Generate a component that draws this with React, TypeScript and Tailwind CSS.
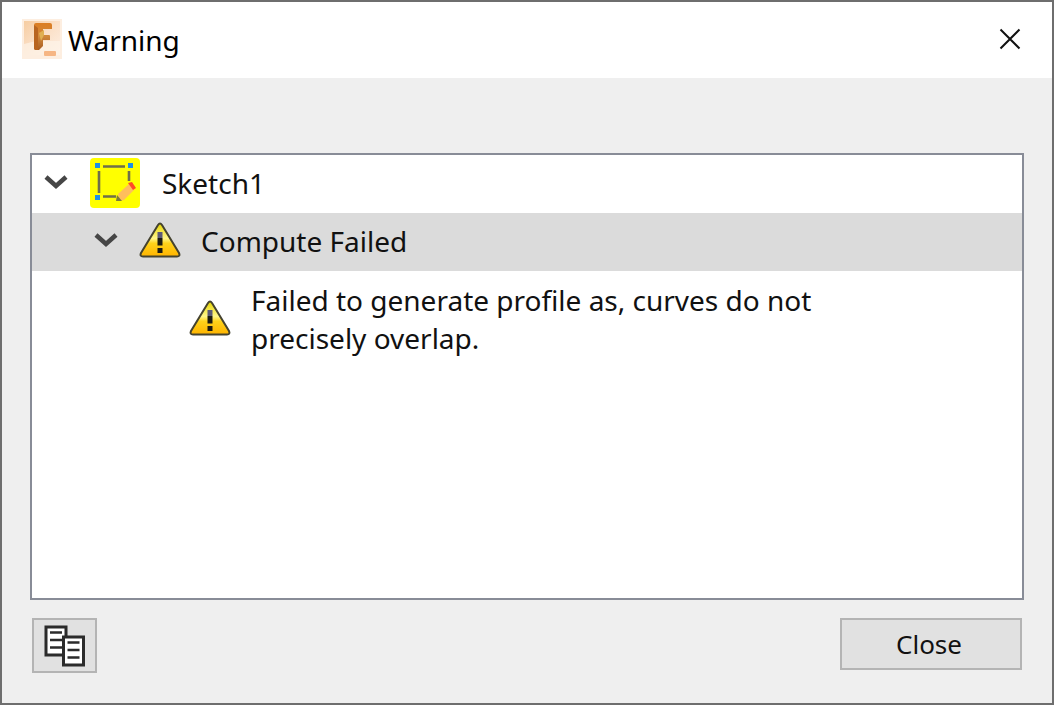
import { useState } from "react";

function FusionIcon() {
  return (
    <svg width="40" height="40" viewBox="0 0 40 40" className="shrink-0" aria-hidden="true">
      <defs>
        <linearGradient id="fusion-bg" x1="0" y1="0" x2="1" y2="1">
          <stop offset="0" stopColor="#f6cda2" />
          <stop offset="0.5" stopColor="#fbe0c8" />
          <stop offset="1" stopColor="#fdf0e4" />
        </linearGradient>
        <linearGradient id="fusion-f" x1="0" y1="0" x2="0" y2="1">
          <stop offset="0" stopColor="#dc7d22" />
          <stop offset="0.5" stopColor="#d0883c" />
          <stop offset="1" stopColor="#a85c20" />
        </linearGradient>
      </defs>
      <rect width="40" height="40" fill="#fdeee0" />
      <rect x="2" y="2" width="36" height="34" fill="url(#fusion-bg)" />
      <path d="M2 25l12-3h24v14H2z" fill="#fef3e8" opacity="0.7" />
      <path d="M14 4h14q2 0 2 2v4h-9v6h6q1 0 1 1v4h-7v6l-4 4h-3q-2 0-2-2V6q0-2 2-2z" fill="url(#fusion-f)" />
      <path d="M12 6l4 3v22h-2q-2 0-2-2z" fill="#b8641f" />
      <path d="M17 14l5-3v5l-3 6z" fill="#e0b052" />
      <rect x="22" y="32" width="12" height="5" rx="1" fill="#f6b684" />
    </svg>
  );
}

function SketchIcon() {
  return (
    <svg width="50" height="50" viewBox="0 0 50 50" className="shrink-0" aria-hidden="true">
      <rect width="50" height="50" rx="4" fill="#ffff00" />
      <path
        d="M13 8.500h22M9 13v22M39 13v10M13 38.500h13"
        stroke="#6f6f4a"
        strokeWidth="2.600"
        fill="none"
      />
      <path d="M5 5h5v5H5zM38 5h5v5h-5zM5 37h5v5H5z" fill="#1e90e6" />
      <path d="M28 36l11-10 5 6-10 10-4 1z" fill="#ffbe5c" />
      <path d="M38 25l4-1 4 6-3 2z" fill="#ff4a26" />
      <path d="M27 37l5 6h-6z" fill="#7b7b3a" />
    </svg>
  );
}

function WarningIcon() {
  return (
    <svg width="42" height="38" viewBox="0 0 42 38" className="shrink-0" aria-hidden="true">
      <defs>
        <linearGradient id="warning-fill" x1="0" y1="0" x2="0" y2="1">
          <stop offset="0" stopColor="#e6d400" />
          <stop offset="0.45" stopColor="#fff68a" />
          <stop offset="0.6" stopColor="#ffd21a" />
          <stop offset="1" stopColor="#ffb400" />
        </linearGradient>
      </defs>
      <path
        d="M19 3q2-3 4 0L40 31q1.500 3.500-2 3.500H4q-3.500 0-2-3.500z"
        fill="url(#warning-fill)"
        stroke="#45432f"
        strokeWidth="2"
      />
      <path d="M18.500 10h5v6h-5z" fill="#5c5a78" />
      <path d="M18.500 16h5v7.500h-5zM18.500 26h5v5h-5z" fill="#1c1a10" />
    </svg>
  );
}

function CopyIcon() {
  return (
    <svg width="42" height="42" viewBox="0 0 42 42" aria-hidden="true">
      <g stroke="#2b2b2b" fill="none">
        <path d="M2 2h20v28H2z" fill="#fff" strokeWidth="3" />
        <path d="M6 7.500h12M6 15h12M6 22.500h12" strokeWidth="2.500" />
        <path d="M19.500 12h20v28h-20z" fill="#fff" strokeWidth="3" />
        <path d="M23.500 17.500h12M23.500 25h12M23.500 32.500h12" strokeWidth="2.500" />
      </g>
    </svg>
  );
}

function Chevron({ open }: { open: boolean }) {
  return (
    <svg
      width="24"
      height="16"
      viewBox="0 0 24 16"
      className={open ? "" : "-rotate-90"}
      aria-hidden="true"
    >
      <path d="M2 2l10 9L22 2" fill="none" stroke="#464646" strokeWidth="4.500" />
    </svg>
  );
}

export default function App() {
  const [sketchOpen, setSketchOpen] = useState(true);
  const [failureOpen, setFailureOpen] = useState(true);

  return (
    <div
      role="dialog"
      aria-labelledby="dialog-title"
      className="flex min-h-screen flex-col border-2 border-[#6e6e6e] bg-[#efefef] font-['Noto_Sans','Open_Sans',sans-serif] text-[28px] text-[#111]"
    >
      <header className="flex h-[76px] items-center justify-between bg-white pb-0.5 pl-5 pr-[31px]">
        <div className="flex items-center gap-1.5">
          <FusionIcon />
          <h1 id="dialog-title" className="pt-0.5 leading-10 text-black">
            Warning
          </h1>
        </div>
        <button type="button" aria-label="Close window">
          <svg width="22" height="22" viewBox="0 0 22 22" aria-hidden="true">
            <path d="M1.500 1.500l19 19M20.500 1.500l-19 19" stroke="#111" strokeWidth="2" />
          </svg>
        </button>
      </header>

      <main className="flex flex-1 flex-col px-7 pt-[75px]">
        <div className="flex-1 border-2 border-[#888c97] bg-white">
          <div className="flex h-[58px] items-center pb-0.5 pl-3">
            <button
              type="button"
              aria-label="Toggle Sketch1"
              aria-expanded={sketchOpen}
              onClick={() => setSketchOpen(!sketchOpen)}
            >
              <Chevron open={sketchOpen} />
            </button>
            <div className="ml-[22px] flex items-center gap-[22px]">
              <SketchIcon />
              <span>Sketch1</span>
            </div>
          </div>

          {sketchOpen && (
            <div className="flex h-[58px] items-center bg-[#dbdbdb] pb-0.5 pl-[62px]">
              <button
                type="button"
                aria-label="Toggle Compute Failed"
                aria-expanded={failureOpen}
                onClick={() => setFailureOpen(!failureOpen)}
              >
                <Chevron open={failureOpen} />
              </button>
              <div className="ml-[21px] flex items-center gap-5">
                <WarningIcon />
                <span>Compute Failed</span>
              </div>
            </div>
          )}

          {sketchOpen && failureOpen && (
            <div className="flex items-center gap-5 py-2.5 pl-[157px]">
              <WarningIcon />
              <p className="max-w-[600px] leading-[38px]">
                Failed to generate profile as, curves do not precisely overlap.
              </p>
            </div>
          )}
        </div>
      </main>

      <footer className="flex items-start justify-between px-[30px] pb-[30px] pt-[18px]">
        <button
          type="button"
          aria-label="Copy"
          className="flex h-[55px] w-[65px] items-center justify-center border-2 border-[#b4b4b4] bg-[#e1e1e1]"
        >
          <CopyIcon />
        </button>
        <button
          type="button"
          className="h-[52px] w-[182px] border-2 border-[#b4b4b4] bg-[#e1e1e1] pr-1 text-[26px]"
        >
          Close
        </button>
      </footer>
    </div>
  );
}
